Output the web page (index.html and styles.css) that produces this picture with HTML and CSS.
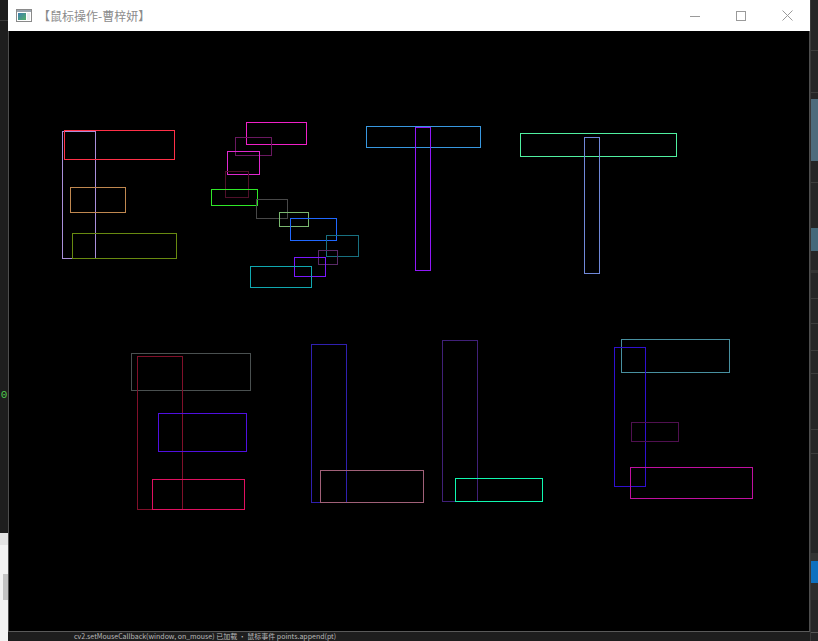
FILE: index.html
```html
<!DOCTYPE html>
<html lang="zh-CN">
<head>
<meta charset="utf-8">
<title>鼠标操作-曹梓妍</title>
<link rel="stylesheet" href="styles.css">
</head>
<body>
<div class="desktop">
  <div class="side-left">
    <div class="left-dark"><span class="green-num">0</span></div>
    <div class="left-light"><div class="left-bar"></div></div>
  </div>
  <div class="main">
    <div class="window">
      <div class="titlebar">
        <svg class="app-icon" width="16" height="13" viewBox="0 0 16 13">
          <defs>
            <linearGradient id="ig" x1="0" y1="0" x2="1" y2="1">
              <stop offset="0" stop-color="#3d7fb0"/>
              <stop offset="1" stop-color="#52b06a"/>
            </linearGradient>
          </defs>
          <rect x="0.5" y="0.5" width="15" height="12" fill="#ffffff" stroke="#8a8a8a"/>
          <rect x="1" y="1" width="14" height="2" fill="#9aa4ae"/>
          <rect x="2" y="4" width="8" height="7" fill="url(#ig)"/>
          <rect x="11" y="4" width="3" height="7" fill="#e8ecef"/>
        </svg>
        <span class="title">【鼠标操作-曹梓妍】</span>
        <div class="controls">
          <div class="ctl"><svg width="10" height="10" viewBox="0 0 10 10"><line x1="0" y1="5.5" x2="10" y2="5.5" stroke="#9a9a9a"/></svg></div>
          <div class="ctl"><svg width="10" height="10" viewBox="0 0 10 10"><rect x="0.5" y="0.5" width="9" height="9" fill="none" stroke="#9a9a9a"/></svg></div>
          <div class="ctl"><svg width="11" height="11" viewBox="0 0 11 11"><path d="M0.5 0.5 L10.5 10.5 M10.5 0.5 L0.5 10.5" stroke="#9a9a9a" fill="none"/></svg></div>
        </div>
      </div>
      <div class="canvas-frame">
        <svg class="canvas" width="800" height="600" viewBox="9 31 800 600" fill="none" stroke-width="1">
          <!-- E -->
          <rect x="62.5" y="131.5" width="33" height="127" stroke="#a98fdb"/>
          <rect x="64.5" y="130.5" width="110" height="29" stroke="#ff3048"/>
          <rect x="70.5" y="187.5" width="55" height="25" stroke="#c08850"/>
          <rect x="72.5" y="233.5" width="104" height="25" stroke="#688a10"/>
          <!-- S -->
          <rect x="246.5" y="122.5" width="60" height="22" stroke="#f020c8"/>
          <rect x="235.5" y="137.5" width="36" height="18" stroke="#6a1860"/>
          <rect x="227.5" y="151.5" width="32" height="23" stroke="#e028d0"/>
          <rect x="225.5" y="171.5" width="23" height="26" stroke="#50102a"/>
          <rect x="211.5" y="189.5" width="46" height="16" stroke="#30e828"/>
          <rect x="256.5" y="199.5" width="31" height="19" stroke="#484848"/>
          <rect x="279.5" y="212.5" width="29" height="14" stroke="#7ab870"/>
          <rect x="290.5" y="218.5" width="46" height="22" stroke="#2068ff"/>
          <rect x="326.5" y="235.5" width="32" height="21" stroke="#187080"/>
          <rect x="318.5" y="250.5" width="19" height="14" stroke="#5a2a68"/>
          <rect x="294.5" y="257.5" width="31" height="19" stroke="#7a18ff"/>
          <rect x="250.5" y="266.5" width="61" height="21" stroke="#10a8b0"/>
          <!-- T -->
          <rect x="366.5" y="126.5" width="114" height="21" stroke="#3898e0"/>
          <rect x="415.5" y="127.5" width="15" height="143" stroke="#9018f8"/>
          <!-- T -->
          <rect x="520.5" y="133.5" width="156" height="23" stroke="#50f0a0"/>
          <rect x="584.5" y="137.5" width="15" height="136" stroke="#7088d8"/>
          <!-- E -->
          <rect x="131.5" y="353.5" width="119" height="37" stroke="#4a5050"/>
          <rect x="137.5" y="356.5" width="45" height="153" stroke="#80102a"/>
          <rect x="158.5" y="413.5" width="88" height="38" stroke="#5010e0"/>
          <rect x="152.5" y="479.5" width="92" height="30" stroke="#e01060"/>
          <!-- L -->
          <rect x="311.5" y="344.5" width="35" height="158" stroke="#3020b0"/>
          <rect x="320.5" y="470.5" width="103" height="32" stroke="#a06078"/>
          <!-- L -->
          <rect x="442.5" y="340.5" width="35" height="161" stroke="#402078"/>
          <rect x="455.5" y="478.5" width="87" height="23" stroke="#10f8b0"/>
          <!-- E -->
          <rect x="621.5" y="339.5" width="108" height="33" stroke="#4890a0"/>
          <rect x="614.5" y="347.5" width="31" height="139" stroke="#3010d0"/>
          <rect x="631.5" y="422.5" width="47" height="19" stroke="#501050"/>
          <rect x="630.5" y="467.5" width="122" height="31" stroke="#c010a0"/>
        </svg>
      </div>
    </div>
    <div class="console">
      <div class="console-line">cv2.setMouseCallback(window, on_mouse) 已加载 · 鼠标事件 points.append(pt)</div>
    </div>
  </div>
  <div class="side-right"></div>
</div>
</body>
</html>
```

FILE: styles.css
```css
* { box-sizing: border-box; }

html, body {
  margin: 0;
  padding: 0;
}

body {
  width: 818px;
  height: 641px;
  overflow: hidden;
  background: #1e1e1e;
  font-family: "Noto Sans CJK SC", "Noto Sans", sans-serif;
}

.desktop {
  display: flex;
  height: 641px;
}

/* left background strip */
.side-left {
  width: 8px;
  display: flex;
  flex-direction: column;
  overflow: hidden;
}

.left-dark {
  height: 533px;
  background: linear-gradient(to bottom, #1e1e1e 0 20px, #3a3a3a 20px 21px, #1e1e1e 21px);
  padding-top: 387px;
  display: flex;
  justify-content: center;
  overflow: hidden;
}

.green-num {
  font-family: "Liberation Mono", monospace;
  font-size: 11px;
  line-height: 16px;
  color: #4ec94e;
}

.left-light {
  flex: 1;
  background: #f3f3f3;
  padding-top: 29px;
  border-top: 12px solid #e4e4e4;
}

.left-bar {
  height: 26px;
  width: 5px;
  margin-left: 3px;
  background: #c4c4c4;
}

/* main column */
.main {
  width: 802px;
  display: flex;
  flex-direction: column;
}

.window {
  height: 632px;
  display: flex;
  flex-direction: column;
}

.titlebar {
  height: 31px;
  background: #ffffff;
  display: flex;
  align-items: center;
}

.app-icon {
  display: block;
  margin-left: 8px;
  margin-top: -1px;
}

.title {
  margin-left: 6px;
  font-size: 12px;
  line-height: 16px;
  color: #8c8c8c;
}

.controls {
  margin-left: auto;
  display: flex;
  height: 100%;
}

.ctl {
  width: 46px;
  height: 100%;
  display: flex;
  align-items: center;
  justify-content: center;
}

.ctl svg { display: block; }

.canvas-frame {
  flex: 1;
  background: #000000;
  border-left: 1px solid #4e4e4e;
  border-right: 1px solid #4e4e4e;
  border-bottom: 1px solid #5a5a5a;
}

.canvas {
  display: block;
}

/* console text below window */
.console {
  flex: 1;
  overflow: hidden;
  background: #1e1e1e;
  padding-left: 66px;
}

.console-line {
  white-space: nowrap;
  font-size: 7px;
  line-height: 9px;
  color: #b8b8b8;
}

/* right background strip */
.side-right {
  width: 8px;
  background: linear-gradient(to bottom,
    #252526 0 50px, #3c3c3c 50px 51px,
    #252526 51px 92px, #3c3c3c 92px 93px,
    #252526 93px 99px, #4d6b7c 99px 161px,
    #252526 161px 182px, #3c3c3c 182px 183px,
    #252526 183px 228px, #44687a 228px 251px,
    #252526 251px 270px, #333333 270px 273px,
    #252526 273px 298px, #3c3c3c 298px 299px,
    #252526 299px 323px, #3c3c3c 323px 324px,
    #252526 324px 350px, #3c3c3c 350px 351px,
    #252526 351px 373px, #3c3c3c 373px 374px,
    #252526 374px 429px, #3c3c3c 429px 430px,
    #252526 430px 453px, #3c3c3c 453px 454px,
    #252526 454px 553px, #333333 553px 561px,
    #0e70c0 561px 583px, #2d2d2d 583px 600px,
    #252526 600px 632px, #555555 632px 633px,
    #252526 633px 641px);
  border-left: 1px solid #3a3a3a;
}
```
